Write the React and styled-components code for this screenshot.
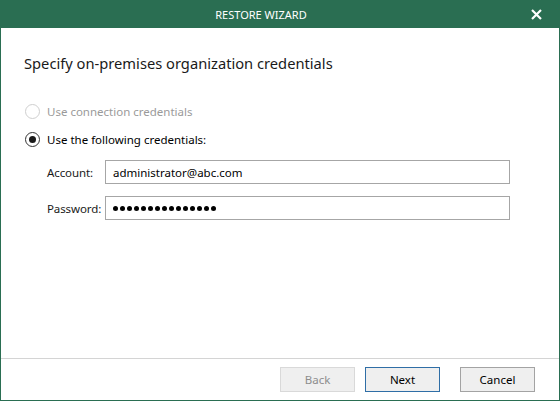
import styled, { createGlobalStyle } from "styled-components";

const GlobalStyle = createGlobalStyle`
  html, body {
    margin: 0;
    padding: 0;
    background: #ffffff;
  }
  * {
    box-sizing: border-box;
  }
`;

const Window = styled.div`
  width: 560px;
  height: 401px;
  display: flex;
  flex-direction: column;
  background: #ffffff;
  border: 1px solid #2a6e52;
  border-top: none;
  font-family: "Noto Sans", "Open Sans", sans-serif;
  font-size: 11.5px;
  color: #000;
`;

const TitleBar = styled.div`
  height: 28px;
  margin: 0 -1px;
  background: #2a6e52;
  display: grid;
  grid-template-columns: 1fr 28px;
  padding-right: 10px;
  align-items: center;
`;

const Title = styled.div`
  text-align: center;
  color: #ffffff;
  font-size: 11px;
`;

const Close = styled.div`
  display: flex;
  align-items: center;
  justify-content: center;
  height: 28px;
`;

const Content = styled.div`
  flex: 1;
  padding: 24px 24px 0 23px;
  display: flex;
  flex-direction: column;
`;

const Heading = styled.div`
  font-size: 14.7px;
  line-height: 22px;
  color: #1a1a1a;
  margin-bottom: 28px;
`;

const Options = styled.div`
  display: flex;
  flex-direction: column;
  gap: 10px;
`;

const RadioRow = styled.div`
  display: flex;
  align-items: center;
  gap: 7px;
  height: 18px;
  padding-left: 1px;
  color: ${(p) => (p.$disabled ? "#9a9a9a" : "#000")};
`;

const RadioCircle = styled.span`
  width: 15px;
  height: 15px;
  border-radius: 50%;
  border: 1px solid ${(p) => (p.$disabled ? "#cfcfcf" : "#333")};
  background: #fff;
  display: flex;
  align-items: center;
  justify-content: center;

  &::after {
    content: "";
    display: ${(p) => (p.$checked ? "block" : "none")};
    width: 7px;
    height: 7px;
    border-radius: 50%;
    background: #1a1a1a;
  }
`;

const Fields = styled.div`
  display: grid;
  grid-template-columns: 58px 405px;
  row-gap: 12px;
  padding-left: 23px;
  margin-top: 12px;
  align-items: center;
`;

const Label = styled.div`
  color: #1a1a1a;
  letter-spacing: -0.1px;
`;

const Field = styled.div`
  height: 24px;
  border: 1px solid #a6a6a6;
  padding: 0 7px;
  display: flex;
  align-items: center;
  gap: 2px;
  color: #000;
`;

const Dot = styled.span`
  width: 5px;
  height: 5px;
  border-radius: 50%;
  background: #000;
`;

const Footer = styled.div`
  height: 42px;
  border-top: 1px solid #d4d4d4;
  display: flex;
  justify-content: flex-end;
  align-items: flex-start;
  padding: 8px 24px 0 0;
  gap: 10px;
`;

const Button = styled.button`
  width: 75px;
  height: 25px;
  font-family: inherit;
  font-size: 11.5px;
  background: #efefef;
  border: 1px solid
    ${(p) =>
      p.$primary ? "#2f6ea6" : p.disabled ? "#d9d9d9" : "#a3a3a3"};
  color: ${(p) => (p.disabled ? "#8d8d8d" : "#000")};
  padding: 0;
  margin-left: ${(p) => (p.$gap ? "10px" : "0")};
`;

const XIcon = () => (
  <svg width="11" height="11" viewBox="0 0 11 11">
    <path d="M1 1 L10 10 M10 1 L1 10" stroke="#fff" strokeWidth="2.2" />
  </svg>
);

export default function App() {
  return (
    <>
      <GlobalStyle />
      <Window>
        <TitleBar>
          <Title>RESTORE WIZARD</Title>
          <Close>
            <XIcon />
          </Close>
        </TitleBar>
        <Content>
          <Heading>Specify on-premises organization credentials</Heading>
          <Options>
            <RadioRow $disabled>
              <RadioCircle $disabled />
              Use connection credentials
            </RadioRow>
            <RadioRow>
              <RadioCircle $checked />
              Use the following credentials:
            </RadioRow>
          </Options>
          <Fields>
            <Label>Account:</Label>
            <Field>administrator@abc.com</Field>
            <Label>Password:</Label>
            <Field>
              {Array.from({ length: 15 }, (_, i) => (
                <Dot key={i} />
              ))}
            </Field>
          </Fields>
        </Content>
        <Footer>
          <Button disabled>Back</Button>
          <Button $primary>Next</Button>
          <Button $gap>Cancel</Button>
        </Footer>
      </Window>
    </>
  );
}
